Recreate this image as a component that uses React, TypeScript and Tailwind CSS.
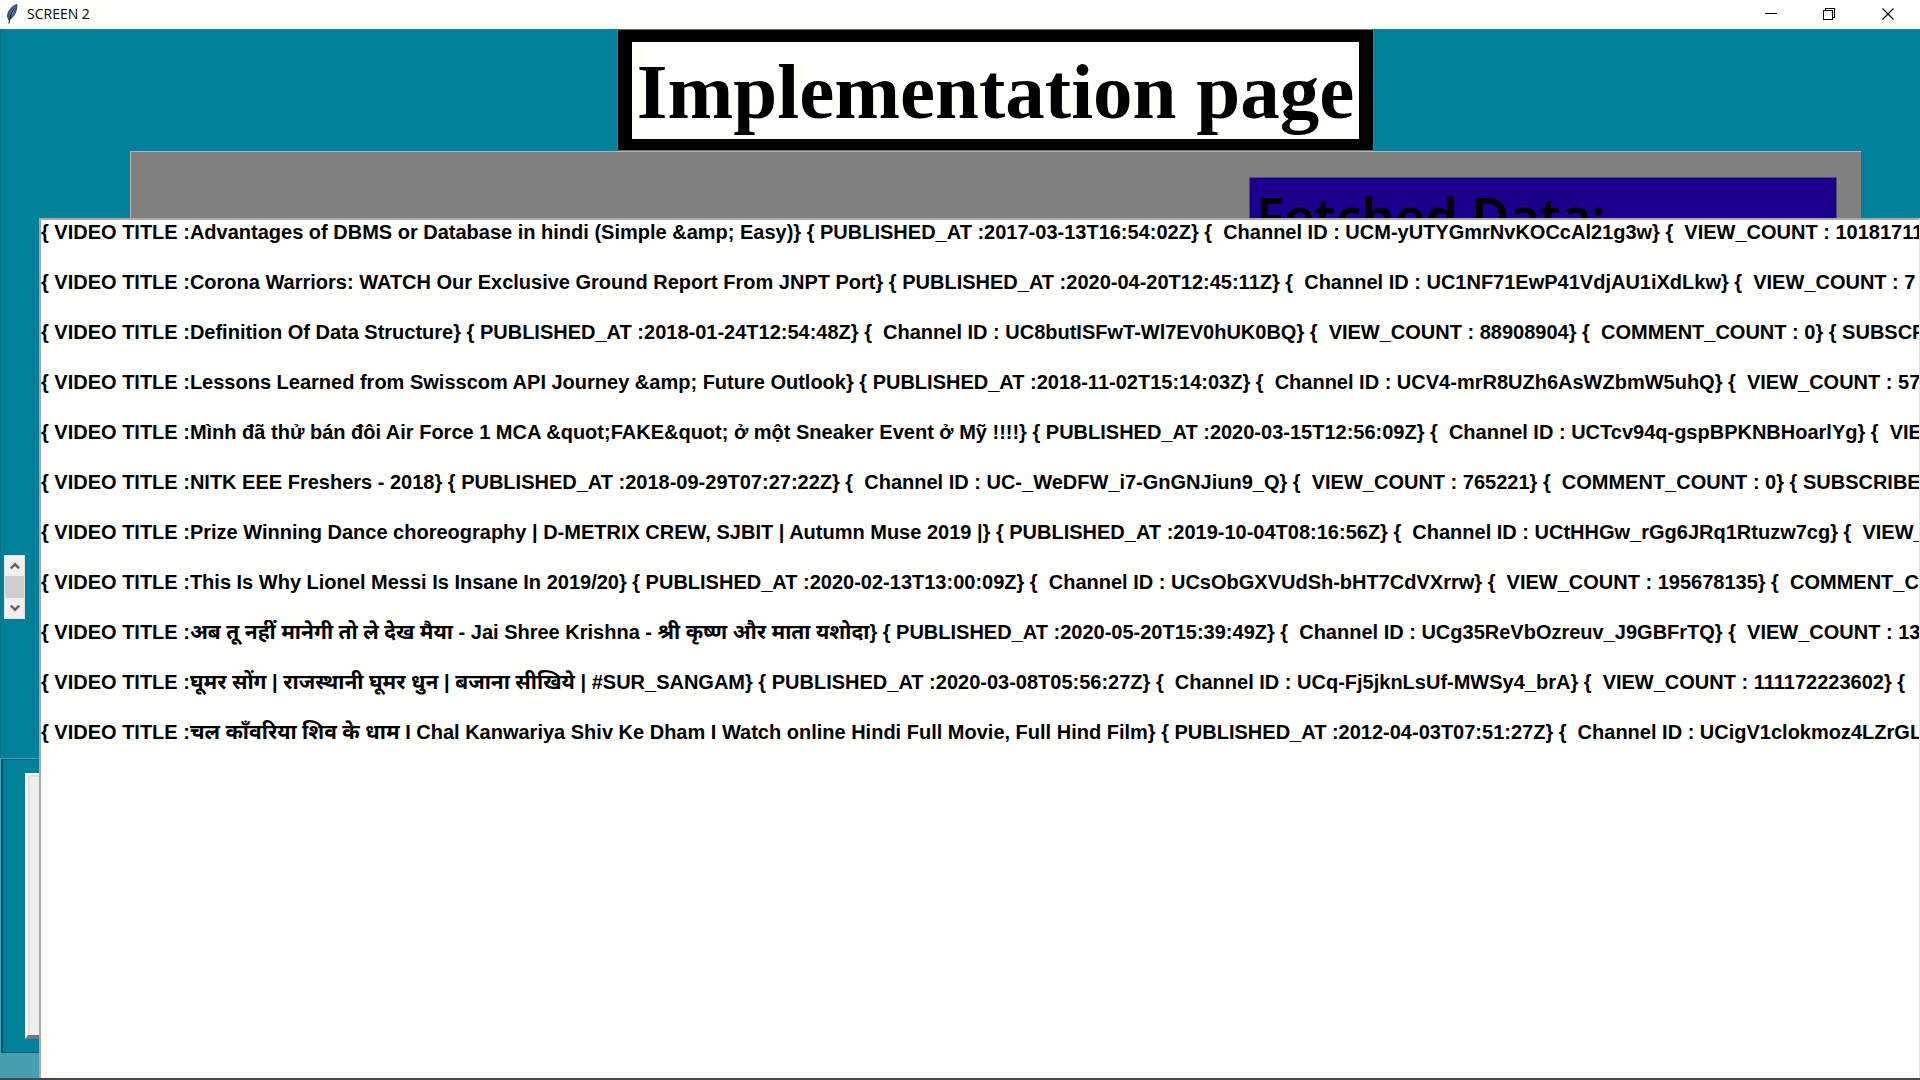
import React from "react";

const videos: string[] = [
  "{ VIDEO TITLE :Advantages of DBMS or Database in hindi (Simple &amp; Easy)} { PUBLISHED_AT :2017-03-13T16:54:02Z} {  Channel ID : UCM-yUTYGmrNvKOCcAl21g3w} {  VIEW_COUNT : 10181711",
  "{ VIDEO TITLE :Corona Warriors: WATCH Our Exclusive Ground Report From JNPT Port} { PUBLISHED_AT :2020-04-20T12:45:11Z} {  Channel ID : UC1NF71EwP41VdjAU1iXdLkw} {  VIEW_COUNT : 7",
  "{ VIDEO TITLE :Definition Of Data Structure} { PUBLISHED_AT :2018-01-24T12:54:48Z} {  Channel ID : UC8butISFwT-Wl7EV0hUK0BQ} {  VIEW_COUNT : 88908904} {  COMMENT_COUNT : 0} { SUBSCRI",
  "{ VIDEO TITLE :Lessons Learned from Swisscom API Journey &amp; Future Outlook} { PUBLISHED_AT :2018-11-02T15:14:03Z} {  Channel ID : UCV4-mrR8UZh6AsWZbmW5uhQ} {  VIEW_COUNT : 57",
  "{ VIDEO TITLE :Mình đã thử bán đôi Air Force 1 MCA &quot;FAKE&quot; ở một Sneaker Event ở Mỹ !!!!} { PUBLISHED_AT :2020-03-15T12:56:09Z} {  Channel ID : UCTcv94q-gspBPKNBHoarlYg} {  VIE",
  "{ VIDEO TITLE :NITK EEE Freshers - 2018} { PUBLISHED_AT :2018-09-29T07:27:22Z} {  Channel ID : UC-_WeDFW_i7-GnGNJiun9_Q} {  VIEW_COUNT : 765221} {  COMMENT_COUNT : 0} { SUBSCRIBE",
  "{ VIDEO TITLE :Prize Winning Dance choreography | D-METRIX CREW, SJBIT | Autumn Muse 2019 |} { PUBLISHED_AT :2019-10-04T08:16:56Z} {  Channel ID : UCtHHGw_rGg6JRq1Rtuzw7cg} {  VIEW_",
  "{ VIDEO TITLE :This Is Why Lionel Messi Is Insane In 2019/20} { PUBLISHED_AT :2020-02-13T13:00:09Z} {  Channel ID : UCsObGXVUdSh-bHT7CdVXrrw} {  VIEW_COUNT : 195678135} {  COMMENT_C",
  "{ VIDEO TITLE :अब तू नहीं मानेगी तो ले देख मैया - Jai Shree Krishna - श्री कृष्ण और माता यशोदा} { PUBLISHED_AT :2020-05-20T15:39:49Z} {  Channel ID : UCg35ReVbOzreuv_J9GBFrTQ} {  VIEW_COUNT : 13",
  "{ VIDEO TITLE :घूमर सोंग | राजस्थानी घूमर धुन | बजाना सीखिये | #SUR_SANGAM} { PUBLISHED_AT :2020-03-08T05:56:27Z} {  Channel ID : UCq-Fj5jknLsUf-MWSy4_brA} {  VIEW_COUNT : 111172223602} {",
  "{ VIDEO TITLE :चल काँवरिया शिव के धाम I Chal Kanwariya Shiv Ke Dham I Watch online Hindi Full Movie, Full Hind Film} { PUBLISHED_AT :2012-04-03T07:51:27Z} {  Channel ID : UCigV1clokmoz4LZrGL",
];

const DEVANAGARI = /([\u0900-\u097F]+(?: [\u0900-\u097F]+)*)/;

/** Sets Devanagari runs slightly larger so they sit evenly beside the Latin text. */
function MixedText({ text }: { text: string }) {
  return (
    <>
      {text.split(DEVANAGARI).map((part, i) =>
        i % 2 ? (
          <span key={i} lang="hi" className="font-['Noto_Sans',sans-serif] text-[21px] leading-none">
            {part}
          </span>
        ) : (
          part
        ),
      )}
    </>
  );
}

function Feather() {
  return (
    <svg width="12" height="20" viewBox="0 0 12 20" aria-hidden="true">
      <path d="M11 0.5C7 1.5 2 6 1.4 12.5L3 16C7 14 11 8 11 0.5Z" fill="#2f5f9e" stroke="#3b3f46" strokeWidth="1" />
      <path d="M9.5 2.5C6 5 4.2 8.5 3.6 13C6.5 10.5 9 6.5 9.5 2.5Z" fill="#6fa8e6" />
      <path d="M8.5 4C5.5 8 3.5 12 3 19.5" fill="none" stroke="#23272e" strokeWidth="1.2" />
    </svg>
  );
}

function TitleBar() {
  return (
    <header className="flex h-[29px] shrink-0 items-center bg-[#fffffb] pr-0.5 pb-px pl-1.5 font-['Open_Sans',sans-serif] text-black">
      <Feather />
      <span className="ml-[9px] text-sm leading-5">SCREEN 2</span>
      <div className="ml-auto flex h-full">
        <button aria-label="Minimize" className="flex w-[58px] items-center justify-center">
          <svg width="12" height="12" viewBox="0 0 12 12" shapeRendering="crispEdges">
            <path d="M0 5.5H12" stroke="#000" />
          </svg>
        </button>
        <button aria-label="Restore" className="flex w-[58px] items-center justify-center">
          <svg width="12" height="12" viewBox="0 0 12 12" fill="none" stroke="#000" shapeRendering="crispEdges">
            <path d="M0.5 2.5H9.5V11.5H0.5ZM2.5 2.5V0.5H11.5V9.5H9.5" />
          </svg>
        </button>
        <button aria-label="Close" className="flex w-[60px] items-center justify-center">
          <svg width="12" height="12" viewBox="0 0 12 12" stroke="#000" strokeWidth="1.2">
            <path d="M0.5 0.5L11.5 11.5M11.5 0.5L0.5 11.5" />
          </svg>
        </button>
      </div>
    </header>
  );
}

function Chevron({ up }: { up?: boolean }) {
  return (
    <svg width="10" height="8" viewBox="0 0 10 8" fill="none" stroke="#606060" strokeWidth="2.4">
      <path d={up ? "M0.8 6.5L5 2.3L9.2 6.5" : "M0.8 1.5L5 5.7L9.2 1.5"} />
    </svg>
  );
}

function Gutter() {
  return (
    <aside className="flex w-[39px] shrink-0 flex-col">
      <div className="flex flex-1 flex-col border-l border-[#0b7186] pl-[3px]">
        <div className="mt-[337px] flex h-16 w-[21px] flex-col border border-[#e2e2e2] bg-[#f0f0f0]">
          <button aria-label="Scroll up" className="flex h-5 items-center justify-center">
            <Chevron up />
          </button>
          <div className="flex-1 bg-[#cdcdcd]" />
          <button aria-label="Scroll down" className="flex h-5 items-center justify-center">
            <Chevron />
          </button>
        </div>
      </div>
      <div className="border-y border-l border-[#3fa5b8]">
        <div className="h-[294px] border-t border-b border-l-2 border-[#035a6c] pt-[13px] pl-[22px]">
          <div className="h-[266px] border-t-2 border-b-4 border-l-[3px] border-t-white border-b-[#777] border-l-white bg-[#efefef]">
            <div className="h-full border-t-2 border-l-2 border-[#e1e1e1]" />
          </div>
        </div>
      </div>
      <div className="h-6 bg-[#469eb0]" />
    </aside>
  );
}

export default function App() {
  return (
    <div className="flex h-screen flex-col overflow-hidden bg-[#008099]">
      <TitleBar />
      <section className="flex h-[189px] shrink-0 flex-col overflow-hidden border-l border-[#0b7186] pr-[59px] pl-[129px]">
        <div className="flex justify-center">
          <h1 className="border border-[#6d6d6d] bg-black px-[14px] pt-3 pb-[11px] font-['Liberation_Serif',serif] text-[79px] leading-[95px] font-bold whitespace-nowrap text-black">
            <span className="block bg-[#fffffb] px-[5px] pt-0.5">Implementation page</span>
          </h1>
        </div>
        <div className="flex flex-1 justify-end border-t border-l border-[#b5b5b5] bg-[#80807f] pt-[25px] pr-6">
          <h2 className="h-24 w-[588px] border border-[#4d4d70] bg-[#1c008b] px-1.5 pt-2 font-['Comic_Sans_MS','Noto_Sans',sans-serif] text-[52px] leading-[60px] font-semibold whitespace-nowrap text-black">
            Fetched Data:
          </h2>
        </div>
      </section>
      <main className="flex min-h-0 flex-1">
        <Gutter />
        <ul
          role="listbox"
          aria-label="Fetched videos"
          className="min-w-0 flex-1 overflow-hidden border-2 border-r border-b-0 border-t-[#a9a9a9] border-r-[#e3e3e3] border-l-[#a9a9a9] bg-[#fffffd] font-['Liberation_Sans','Noto_Sans',sans-serif] text-xl leading-[24px] font-bold text-black"
        >
          {videos.map((video) => (
            <li key={video} role="option" aria-selected="false" className="h-[50px] overflow-hidden whitespace-pre">
              <MixedText text={video} />
            </li>
          ))}
        </ul>
      </main>
      <footer className="h-0.5 shrink-0 bg-[#454a50]" />
    </div>
  );
}
